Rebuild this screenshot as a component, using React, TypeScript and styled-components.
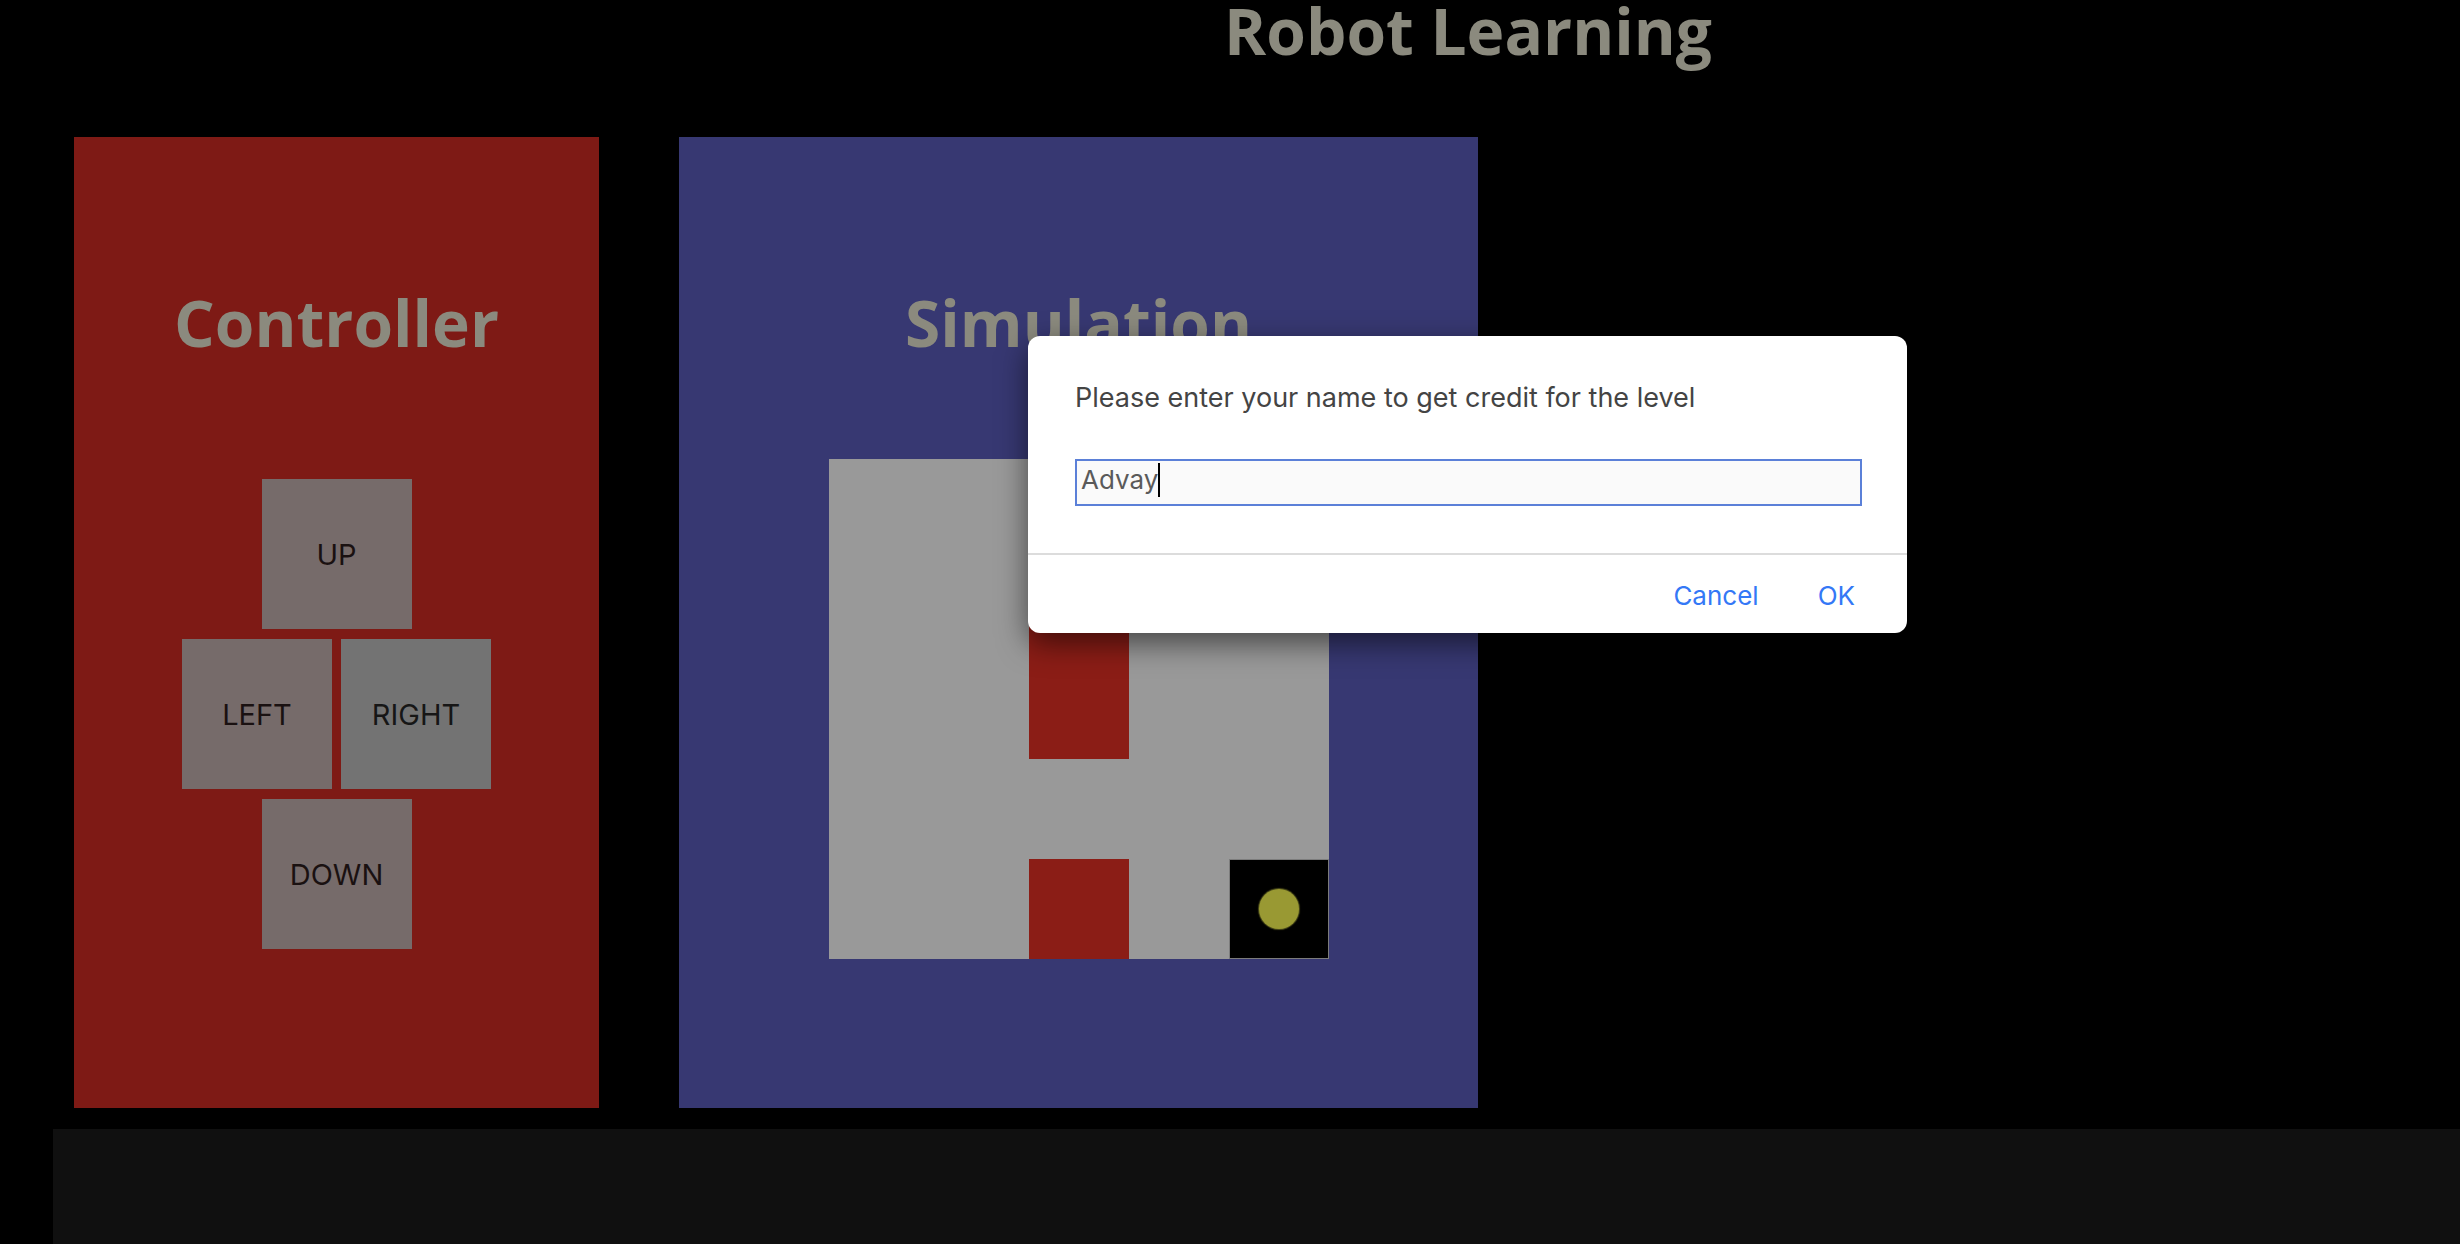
import React from "react";
import styled, { createGlobalStyle } from "styled-components";

const Global = createGlobalStyle`
  html, body { margin: 0; padding: 0; background: #000; }
  body { width: 2460px; height: 1244px; overflow: hidden; font-family: "Open Sans", sans-serif; }
  * { box-sizing: border-box; }
`;

const Page = styled.div`
  position: relative;
  width: 2460px;
  height: 1244px;
  background: #000;
  display: flex;
  flex-direction: column;
`;

const Title = styled.h1`
  margin: 0;
  padding-left: 476px;
  text-align: center;
  font-family: "Open Sans", sans-serif;
  font-weight: 700;
  font-size: 64px;
  line-height: 62px;
  color: #8b8a7e;
`;

const Panels = styled.div`
  display: flex;
  gap: 80px;
  padding-left: 74px;
  margin-top: 75px;
`;

const Panel = styled.section<{ $bg: string; $width: number }>`
  width: ${(p) => p.$width}px;
  height: 971px;
  background: ${(p) => p.$bg};
  display: flex;
  flex-direction: column;
  align-items: center;
  padding-top: 141px;
`;

const PanelHeading = styled.h2`
  margin: 0;
  font-family: "Open Sans", sans-serif;
  font-weight: 700;
  font-size: 64px;
  line-height: 90px;
  color: #8b8a7e;
`;

const Pad = styled.div`
  margin-top: 111px;
  display: flex;
  flex-direction: column;
  align-items: center;
  gap: 10px;
`;

const PadRow = styled.div`
  display: flex;
  gap: 9px;
`;

const PadButton = styled.button<{ $active?: boolean }>`
  width: 150px;
  height: 150px;
  border: none;
  padding: 0;
  display: flex;
  align-items: center;
  justify-content: center;
  background: ${(p) => (p.$active ? "#737373" : "#766b6a")};
  color: ${(p) => (p.$active ? "#161616" : "#1a1111")};
  font-family: "Inter", "Liberation Sans", sans-serif;
  font-size: 29px;
  font-weight: 400;
  cursor: pointer;
`;

const Grid = styled.div`
  margin-top: 91px;
  display: grid;
  grid-template-columns: repeat(5, 100px);
  grid-template-rows: repeat(5, 100px);
  background: #999999;
`;

type CellKind = "empty" | "wall" | "robot";

const Cell = styled.div<{ $kind: CellKind }>`
  display: flex;
  align-items: center;
  justify-content: center;
  background: ${(p) => (p.$kind === "wall" ? "#8b1d16" : p.$kind === "robot" ? "#000" : "#999999")};
  border: 1px solid
    ${(p) => (p.$kind === "wall" ? "#8b1d16" : p.$kind === "robot" ? "#7c7c7c" : "#999999")};
`;

const Robot = styled.div`
  width: 40px;
  height: 40px;
  border-radius: 50%;
  background: #999933;
  box-shadow: 0 0 1px 1px rgba(153, 153, 51, 0.5);
`;

const BottomBar = styled.div`
  margin-top: 21px;
  margin-left: 53px;
  flex: 1;
  background: #101010;
`;

const Dialog = styled.div`
  position: absolute;
  left: 1028px;
  top: 336px;
  width: 879px;
  height: 297px;
  background: #fff;
  border-radius: 12px;
  box-shadow: 0 10px 30px rgba(0, 0, 0, 0.55);
  display: flex;
  flex-direction: column;
  font-family: "Inter", "Liberation Sans", sans-serif;
`;

const DialogBody = styled.div`
  padding: 47px 45px 47px 47px;
  display: flex;
  flex-direction: column;
  gap: 46px;
  border-bottom: 2px solid #dcdcdc;
`;

const Message = styled.p`
  margin: 0;
  font-size: 27px;
  line-height: 30px;
  color: #444444;
`;

const Field = styled.div`
  height: 47px;
  border: 2px solid #5b80d8;
  background: #fafafa;
  padding: 0 0 0 4px;
  display: flex;
  align-items: flex-start;
  font-size: 26px;
  line-height: 37px;
  color: #5a5a5a;
`;

const Caret = styled.span`
  display: inline-block;
  width: 2px;
  height: 34px;
  margin-top: 2px;
  background: #000;
`;

const Footer = styled.div`
  display: flex;
  justify-content: flex-end;
  gap: 59px;
  padding: 26px 52px 0 0;
`;

const DialogButton = styled.button`
  border: none;
  background: none;
  padding: 0;
  font-family: "Inter", "Liberation Sans", sans-serif;
  font-size: 26px;
  line-height: 30px;
  color: #3478f6;
  cursor: pointer;
`;

const layout: CellKind[][] = [
  ["empty", "empty", "empty", "empty", "empty"],
  ["empty", "empty", "wall", "empty", "empty"],
  ["empty", "empty", "wall", "empty", "empty"],
  ["empty", "empty", "empty", "empty", "empty"],
  ["empty", "empty", "wall", "empty", "robot"],
];

export default function App() {
  return (
    <Page>
      <Global />
      <Title>Robot Learning</Title>
      <Panels>
        <Panel $bg="#7e1a15" $width={525}>
          <PanelHeading>Controller</PanelHeading>
          <Pad>
            <PadRow>
              <PadButton>UP</PadButton>
            </PadRow>
            <PadRow>
              <PadButton>LEFT</PadButton>
              <PadButton $active>RIGHT</PadButton>
            </PadRow>
            <PadRow>
              <PadButton>DOWN</PadButton>
            </PadRow>
          </Pad>
        </Panel>
        <Panel $bg="#373872" $width={799}>
          <PanelHeading>Simulation</PanelHeading>
          <Grid>
            {layout.flatMap((row, r) =>
              row.map((kind, c) => (
                <Cell key={`${r}-${c}`} $kind={kind}>
                  {kind === "robot" && <Robot />}
                </Cell>
              ))
            )}
          </Grid>
        </Panel>
      </Panels>
      <BottomBar />
      <Dialog role="dialog">
        <DialogBody>
          <Message>Please enter your name to get credit for the level</Message>
          <Field>
            Advay
            <Caret />
          </Field>
        </DialogBody>
        <Footer>
          <DialogButton>Cancel</DialogButton>
          <DialogButton>OK</DialogButton>
        </Footer>
      </Dialog>
    </Page>
  );
}
